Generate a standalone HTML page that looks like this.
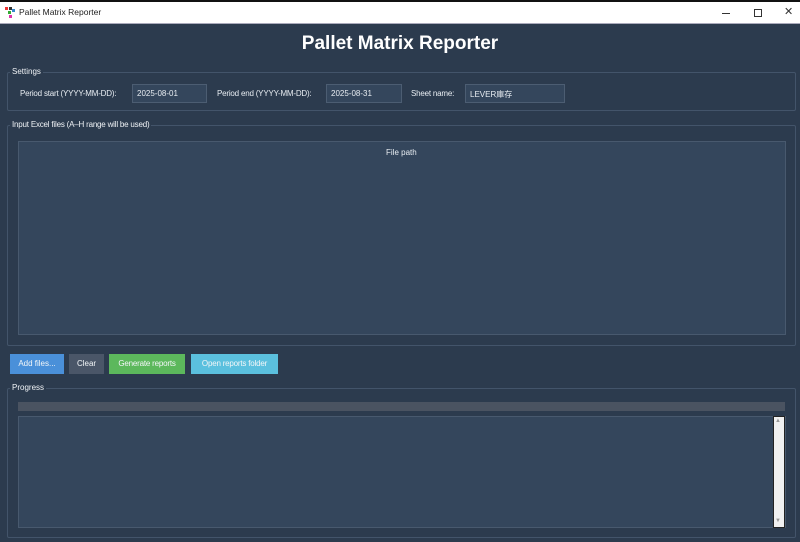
<!DOCTYPE html>
<html><head><meta charset="utf-8"><style>
*{margin:0;padding:0;box-sizing:border-box}
body{width:800px;height:542px;overflow:hidden;background:#2c3b4e;font-family:"Liberation Sans","Noto Sans CJK SC",sans-serif;font-size:8px;color:#e8edf2;position:relative}
.tb{position:absolute;left:0;top:0;width:800px;height:24px;background:#fff;border-top:2px solid #111;border-bottom:1px solid #aab;color:#222;font-size:8.5px}
.a{position:absolute}
.grp{position:absolute;border:1px solid #43546a;border-radius:2px}
.lbl{position:absolute;background:#2c3b4e;padding:0 2px;color:#f0f3f6;font-size:8px}
.in{position:absolute;height:19px;background:#34465c;border:1px solid #4c5d72;font-size:8px;padding:4px 0 0 4px;color:#e8edf2}
.btn{position:absolute;top:354px;height:20px;color:#f3f6f8;font-size:8px;text-align:center;line-height:20px}
.f{letter-spacing:-0.2px}
</style></head><body>
<div class="tb">
 <svg class="a" style="left:5px;top:5px" width="10" height="11"><rect x="0" y="0" width="3" height="3" fill="#e33"/><rect x="4" y="0" width="3" height="3" fill="#333"/><rect x="3" y="4" width="3" height="3" fill="#3a3"/><rect x="4" y="8" width="3" height="3" fill="#d3a"/><rect x="7" y="2" width="3" height="3" fill="#38c"/></svg>
 <div class="a" style="left:19px;top:5px">Pallet Matrix Reporter</div>
 <div class="a" style="left:722px;top:11px;width:8px;height:1px;background:#333"></div>
 <div class="a" style="left:754px;top:7px;width:8px;height:8px;border:1px solid #333"></div>
 <div class="a" style="left:784px;top:3px;font-size:11px;color:#333">✕</div>
</div>
<div class="a" style="left:0;top:33px;width:800px;text-align:center;font-size:19px;font-weight:bold;color:#fff">Pallet Matrix Reporter</div>

<div class="grp" style="left:7px;top:72px;width:789px;height:39px"></div>
<div class="lbl" style="left:10px;top:67px">Settings</div>
<div class="a f" style="left:20px;top:89px">Period start (YYYY-MM-DD):</div>
<div class="in" style="left:132px;top:84px;width:75px">2025-08-01</div>
<div class="a f" style="left:217px;top:89px">Period end (YYYY-MM-DD):</div>
<div class="in" style="left:326px;top:84px;width:76px">2025-08-31</div>
<div class="a f" style="left:411px;top:89px">Sheet name:</div>
<div class="in" style="left:465px;top:84px;width:100px">LEVER庫存</div>

<div class="grp" style="left:7px;top:125px;width:789px;height:221px"></div>
<div class="lbl f" style="left:10px;top:120px">Input Excel files (A–H range will be used)</div>
<div class="a" style="left:18px;top:141px;width:768px;height:194px;background:#34465c;border:1px solid #48596e"></div>
<div class="a" style="left:386px;top:148px">File path</div>

<div class="btn" style="left:10px;width:54px;background:#4a90d9">Add files...</div>
<div class="btn" style="left:69px;width:35px;background:#4a5668">Clear</div>
<div class="btn f" style="left:109px;width:76px;background:#5cb85c">Generate reports</div>
<div class="btn f" style="left:191px;width:87px;background:#5bc0de">Open reports folder</div>

<div class="grp" style="left:7px;top:388px;width:789px;height:150px"></div>
<div class="lbl" style="left:10px;top:383px">Progress</div>
<div class="a" style="left:18px;top:402px;width:767px;height:9px;background:#4a5361"></div>
<div class="a" style="left:18px;top:416px;width:768px;height:112px;background:#34465c;border:1px solid #48596e"></div>
<div class="a" style="left:773px;top:416px;width:12px;height:112px;background:#f0f0f0;border:1px solid #222"></div>
<div class="a" style="left:775px;top:418px;font-size:6px;color:#999">▲</div>
<div class="a" style="left:775px;top:518px;font-size:6px;color:#999">▼</div>
</body></html>
